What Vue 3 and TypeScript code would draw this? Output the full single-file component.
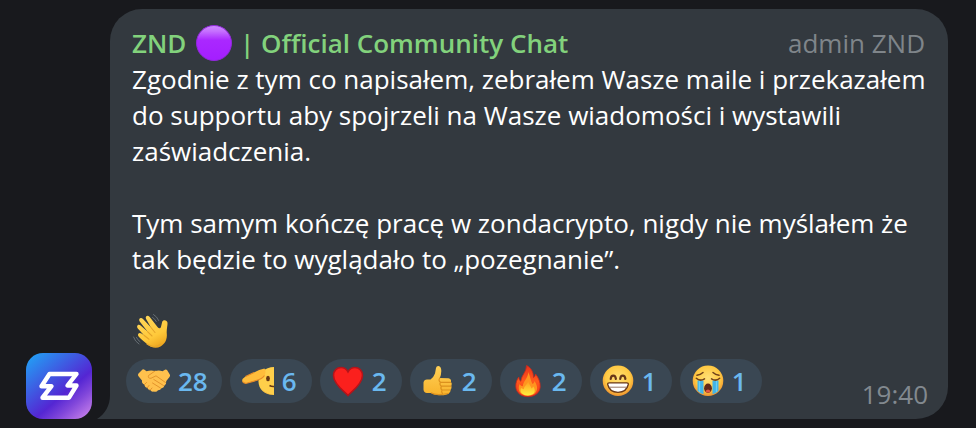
<script setup lang="ts">
type Emoji = 'handshake' | 'salute' | 'heart' | 'thumb' | 'fire' | 'grin' | 'cry'

interface Reaction {
  emoji: Emoji
  label: string
  count: number
}

const paragraphs: string[] = [
  'Zgodnie z tym co napisałem, zebrałem Wasze maile i przekazałem do supportu aby spojrzeli na Wasze wiadomości i wystawili zaświadczenia.',
  'Tym samym kończę pracę w zondacrypto, nigdy nie myślałem że tak będzie to wyglądało to „pozegnanie”.',
]

const reactions: Reaction[] = [
  { emoji: 'handshake', label: 'Handshake', count: 28 },
  { emoji: 'salute', label: 'Salute', count: 6 },
  { emoji: 'heart', label: 'Heart', count: 2 },
  { emoji: 'thumb', label: 'Thumbs up', count: 2 },
  { emoji: 'fire', label: 'Fire', count: 2 },
  { emoji: 'grin', label: 'Grin', count: 1 },
  { emoji: 'cry', label: 'Crying', count: 1 },
]
</script>

<template>
  <main class="chat">
    <svg class="avatar" viewBox="0 0 66 66" role="img" aria-label="ZND">
      <defs>
        <linearGradient id="avatar-fill" x1="0.05" y1="0" x2="0.9" y2="1">
          <stop offset="0" stop-color="#20a4f6" />
          <stop offset="0.32" stop-color="#3b63e4" />
          <stop offset="0.62" stop-color="#5426d3" />
          <stop offset="0.78" stop-color="#8046da" />
          <stop offset="1" stop-color="#c57eea" />
        </linearGradient>
      </defs>
      <rect width="66" height="66" rx="17" fill="url(#avatar-fill)" />
      <path
        d="M23.500 21H50.500L41.500 32.500H50.500L43 44.700H16.500L25.500 33.200H15.500Z"
        fill="none" stroke="#fff" stroke-width="4.400" stroke-linejoin="round"
      />
    </svg>

    <article class="bubble">
      <svg class="tail" viewBox="0 0 14 24" aria-hidden="true">
        <path d="M13 0C13 11 8 19 0 24H14V0Z" fill="#33393f" />
      </svg>
      <header class="head">
        <h1 class="title">
          ZND
          <svg class="orb" viewBox="0 0 36 36" aria-hidden="true">
            <defs>
              <linearGradient id="orb-fill" x1="0" y1="0" x2="0" y2="1">
                <stop offset="0" stop-color="#cf8cff" />
                <stop offset="0.16" stop-color="#c671ff" />
                <stop offset="0.42" stop-color="#aa28ff" />
                <stop offset="1" stop-color="#a41eff" />
              </linearGradient>
            </defs>
            <circle cx="18" cy="18" r="17.5" fill="url(#orb-fill)" stroke="#9128dc" stroke-width="1" />
          </svg>
          | Official Community Chat
        </h1>
        <span class="role">admin ZND</span>
      </header>

      <div class="text">
        <p v-for="p in paragraphs" :key="p">{{ p }}</p>
        <svg class="wave" viewBox="0 0 38 36" role="img" aria-label="Waving hand">
          <defs>
            <linearGradient id="wave-fill" x1="0.2" y1="0" x2="0.7" y2="1">
              <stop offset="0" stop-color="#ffd75a" />
              <stop offset="0.65" stop-color="#ffc93a" />
              <stop offset="1" stop-color="#eda51d" />
            </linearGradient>
          </defs>
          <path
            d="M15 31C12 28.500 8 25.500 6.400 23.200C5 20.900 7.300 18.900 9.500 20.500L12 22.300L5.800 15.500C3.900 13 6.300 10.600 8.600 12.500L15.500 18.600L7.700 8.600C6 6 8.700 3.700 11 6L19 14.500L14.100 6C12.700 3.300 15.600 1.300 17.500 3.700L25.500 14C27.200 16.200 28.800 15.500 29.200 13L30.100 9.200C30.800 6.200 35.200 6.800 35.500 9.800C35.700 12 34.600 16 34.700 19.500C35.700 27 32.500 31 28.500 33.500C24 36 18.500 34.500 15 31Z"
            fill="url(#wave-fill)"
          />
          <path
            d="M12 22.300L17 26.200M15.500 18.600L20 23M19 14.500L23 19.500M15 31C20 34.500 25 34 29 31"
            fill="none" stroke="#e5a52a" stroke-width="1.100" stroke-linecap="round"
          />
          <path
            d="M21.500 1.500Q25 3.500 26.700 7.500M20.600 4.500Q23 6 24.300 8.500M1.500 24Q3 28.500 7 31M4.500 24.500Q5.500 27 8 28.700"
            fill="none" stroke="#666e74" stroke-width="1" stroke-linecap="round"
          />
        </svg>
      </div>

      <svg class="defs" aria-hidden="true">
        <defs>
          <radialGradient id="face-fill" cx="0.5" cy="0.42" r="0.58">
            <stop offset="0" stop-color="#ffe078" />
            <stop offset="0.7" stop-color="#ffc942" />
            <stop offset="1" stop-color="#ee9230" />
          </radialGradient>
          <linearGradient id="skin-fill" x1="0" y1="0" x2="0" y2="1">
            <stop offset="0" stop-color="#ffd056" />
            <stop offset="1" stop-color="#f8b32c" />
          </linearGradient>
          <linearGradient id="flame-fill" x1="0" y1="0" x2="0" y2="1">
            <stop offset="0" stop-color="#e9301b" />
            <stop offset="0.5" stop-color="#ff5a1c" />
            <stop offset="1" stop-color="#f0341b" />
          </linearGradient>
          <linearGradient id="flame-core" x1="0" y1="0" x2="0" y2="1">
            <stop offset="0" stop-color="#ff9a1f" />
            <stop offset="1" stop-color="#fff03e" />
          </linearGradient>
        </defs>
      </svg>

      <footer class="foot">
        <div class="reactions">
          <button v-for="r in reactions" :key="r.emoji" class="chip" type="button" :title="r.label">
            <svg class="emoji" viewBox="0 0 32 32" aria-hidden="true">
              <g v-if="r.emoji === 'handshake'">
                <path
                  d="M0.500 8.500L4.500 4.500Q5.500 4 6.500 4.800L8.500 6.200Q13 4.800 17 6Q21 4.800 24.500 6.200L27 4.800Q28.200 4 29.200 5.300L31.800 9.500Q32.500 10.800 31.500 12L28.300 16Q28.500 19 26.500 20.500Q25.800 23 23.500 23.300Q22.300 25.300 20 25.200Q18.500 27.500 15.800 26.500Q13.500 27.200 12.300 25Q10 25 9.300 22.800Q6.500 22.300 6.500 19.500Q3.500 18.500 4 15.500L0.300 11Q-0.500 9.600 0.500 8.500Z"
                  fill="#ffc14d"
                />
                <path
                  d="M17 6L10.500 10.500Q9.500 13.500 13 13.300L18 10.800L27.500 17.500M15.800 14.500L25.500 20.500M14.500 18L22.500 23M6.500 19.500L8.500 17.500M9.300 22.800L11 20.500M12.300 25L14 23"
                  fill="none" stroke="#e3942c" stroke-width="1" stroke-linecap="round" stroke-linejoin="round"
                />
              </g>
              <g v-else-if="r.emoji === 'salute'">
                <path d="M32 2Q25 2 20.500 6.500Q16.500 11 16.500 16.500Q16.500 22 20.500 26Q25 30 32 30Z" fill="#ffcf4a" />
                <path d="M28 29.600Q21 27.500 18.500 22.500Q21.500 28.500 32 30Z" fill="#ed9a2e" />
                <path
                  d="M22.500 3.500Q17 4.500 12 7.500L3.500 11.500Q-0.500 14 0.300 16.500Q1.500 19 5.500 18L14 15.500Q19.500 14.500 22.500 10.500Q24.500 7 22.500 3.500Z"
                  fill="#ffbd3b"
                />
                <path
                  d="M0.500 16.500Q2 19 5.500 18L14 15.500Q19.500 14.500 22.500 10.500M12 7.500L3.500 11.500"
                  fill="none" stroke="#e78b28" stroke-width="1.200"
                />
                <ellipse cx="26" cy="13.500" rx="1.900" ry="2.700" fill="#663714" />
                <path d="M27.500 20.500Q29.500 21.700 32 21.500" fill="none" stroke="#663714" stroke-width="1.500" />
              </g>
              <g v-else-if="r.emoji === 'heart'">
                <path
                  d="M16 30.500C12.500 26.500 1.500 19.500 1.500 10.500C1.500 5.500 5 2.500 9 2.500C12 2.500 14.700 4.200 16 6.800C17.300 4.200 20 2.500 23 2.500C27 2.500 30.500 5.500 30.500 10.500C30.500 19.500 19.500 26.500 16 30.500Z"
                  fill="#fb201d" stroke="#b5141a" stroke-width="1.600"
                />
              </g>
              <g v-else-if="r.emoji === 'thumb'">
                <path
                  d="M1.500 17.500Q2 14.500 5 14.500H8.500Q11.500 12.500 13 8.500L14 3Q14.500 0.800 16.500 1Q19.300 1.500 19.300 6Q19.300 9.500 17.800 13L26.500 13.300Q29.500 14 29 17Q30.500 18.700 29.300 21Q30.200 23.200 28.500 25Q28.800 27.500 26.500 28.500Q24.500 30.500 18 30.300Q12 30 9.500 28H5Q1.800 27.800 1.500 24.500Z"
                  fill="url(#skin-fill)"
                />
                <path
                  d="M17.800 13Q16 15.500 18.500 17.300M19 17.300H28.500M19.500 21.200H28.800M20 25H28M18.500 17.300Q17 19.500 19.500 21.200Q18 23.500 20 25Q19 27 20.500 28.500M9.500 28Q14 30.800 26.500 28.500"
                  fill="none" stroke="#dc911e" stroke-width="1.200" stroke-linecap="round"
                />
              </g>
              <g v-else-if="r.emoji === 'fire'">
                <path
                  d="M14.500 0.500C19 2.500 21.500 7 21.500 12.500C22.700 11.800 23.300 10.500 23.500 9C26.500 12.500 28.500 17 28.200 22C27.800 28 22.500 31.700 16 31.700C9.500 31.700 4 28 3.800 21.500C3.700 17.500 5 14.500 6.800 12C7 14.200 7.600 15.500 8.800 16.300C9.500 9.500 14.500 7.500 14.500 0.500Z"
                  fill="url(#flame-fill)" stroke="#c7281d" stroke-width="0.800"
                />
                <path
                  d="M16.200 7C18.500 12 18.600 16 20.500 19C21.700 18.300 22.300 17.300 22.500 16C25 20 26 23 24.300 26.500C22.700 29.500 19.500 30.800 16 30.800C11.500 30.800 7.500 28.500 6.800 24.500C6.500 22 7 20.500 7.600 19C8.500 20.500 9.500 21.200 10.800 21.300C11 16 16.500 13 16.200 7Z"
                  fill="#ff941f"
                />
                <path
                  d="M16.300 16C16.500 19 19 21 19.500 23.500L21.500 21.500C23.500 25 23 27.500 21 29C18.500 31 12.500 31 10 28.500C8.300 27 8.200 25 9 23L11.800 24.300C12 21 15.500 19.500 16.300 16Z"
                  fill="url(#flame-core)"
                />
              </g>
              <g v-else-if="r.emoji === 'grin'">
                <circle cx="16" cy="15.700" r="15.300" fill="url(#face-fill)" />
                <path
                  d="M8.700 14Q9 10.700 11.300 10.700Q13.500 10.700 13.900 14M18.200 14Q18.500 10.700 20.800 10.700Q23 10.700 23.400 14"
                  fill="none" stroke="#683719" stroke-width="2.200" stroke-linecap="round"
                />
                <path d="M5.700 19.500Q5.500 17.900 7.200 17.900H24.800Q26.500 17.900 26.300 19.500Q24.500 27.300 16 27.300Q7.500 27.300 5.700 19.500Z" fill="#fff" stroke="#683719" stroke-width="1.300" />
                <path d="M7 22.200H25" stroke="#8b6955" stroke-width="0.900" />
              </g>
              <g v-else>
                <circle cx="16" cy="15.700" r="15.300" fill="url(#face-fill)" />
                <path d="M5.500 15.500H11.500V29.300Q8 28.500 5.500 25.800ZM20.500 15.500H26.500V25.800Q24 28.500 20.500 29.300Z" fill="#42b4e8" />
                <path d="M7.500 16V27M24.500 16V27" stroke="#69cef5" stroke-width="1.300" />
                <path
                  d="M4.300 13.200Q8 16.700 12.500 13.800M19.500 13.800Q24 16.700 27.700 13.200M5 10.300Q8.500 9.800 11 7.500M21 7.500Q23.500 9.800 27 10.300"
                  fill="none" stroke="#70401a" stroke-width="1.500" stroke-linecap="round"
                />
                <ellipse cx="16" cy="23.300" rx="3.900" ry="4.700" fill="#632817" />
                <path d="M13.200 26.300Q16 22.800 18.800 26.300Q16 29 13.200 26.300Z" fill="#e65745" />
              </g>
            </svg>
            <span>{{ r.count }}</span>
          </button>
        </div>
        <time class="time" datetime="19:40">19:40</time>
      </footer>
    </article>
  </main>
</template>

<style>
body {
  margin: 0;
  background: #18191d;
}
</style>

<style scoped>
.chat {
  display: flex;
  align-items: flex-end;
  gap: 18px;
  min-height: 100vh;
  box-sizing: border-box;
  padding: 9px 28px 9px 26px;
  background: #18191d;
  font-family: "Open Sans", "Noto Sans", sans-serif;
  font-size: 26px;
  line-height: 36px;
  color: #fff;
}

.avatar {
  flex: none;
  width: 66px;
  height: 66px;
}

.bubble {
  position: relative;
  flex: 1;
  min-width: 0;
  padding: 16px 20px 7px 16px;
  border-radius: 32px 32px 32px 0;
  background: #33393f;
}

.tail {
  position: absolute;
  left: -13px;
  bottom: 0;
  width: 14px;
  height: 24px;
}

.head {
  display: flex;
  justify-content: space-between;
  padding: 0 3px 0 6px;
}

.title {
  margin: 0;
  font-size: 26px;
  font-weight: 600;
  color: #82d27c;
}

.orb {
  width: 36px;
  height: 36px;
  margin: 0 1px 0 3px;
  vertical-align: bottom;
}

.role {
  color: #7f858a;
}

.text {
  padding: 0 0 0 6px;
}

.text p {
  margin: 0 0 36px;
}

.wave {
  display: block;
  width: 38px;
  height: 36px;
}

.defs {
  position: absolute;
  width: 0;
  height: 0;
}

.foot {
  display: flex;
  align-items: flex-end;
  justify-content: space-between;
  padding-top: 10px;
}

.reactions {
  display: flex;
  flex-wrap: wrap;
  gap: 8px;
  margin-bottom: 9px;
}

.chip {
  display: flex;
  align-items: center;
  gap: 8px;
  min-width: 82px;
  height: 44px;
  padding: 0 14px 0 12px;
  border: 0;
  border-radius: 22px;
  background: #3a4753;
  color: #6ab8ef;
  font: inherit;
  font-weight: 600;
  cursor: pointer;
}

.emoji {
  flex: none;
  width: 32px;
  height: 32px;
  overflow: visible;
}

.time {
  color: #82898f;
}
</style>
